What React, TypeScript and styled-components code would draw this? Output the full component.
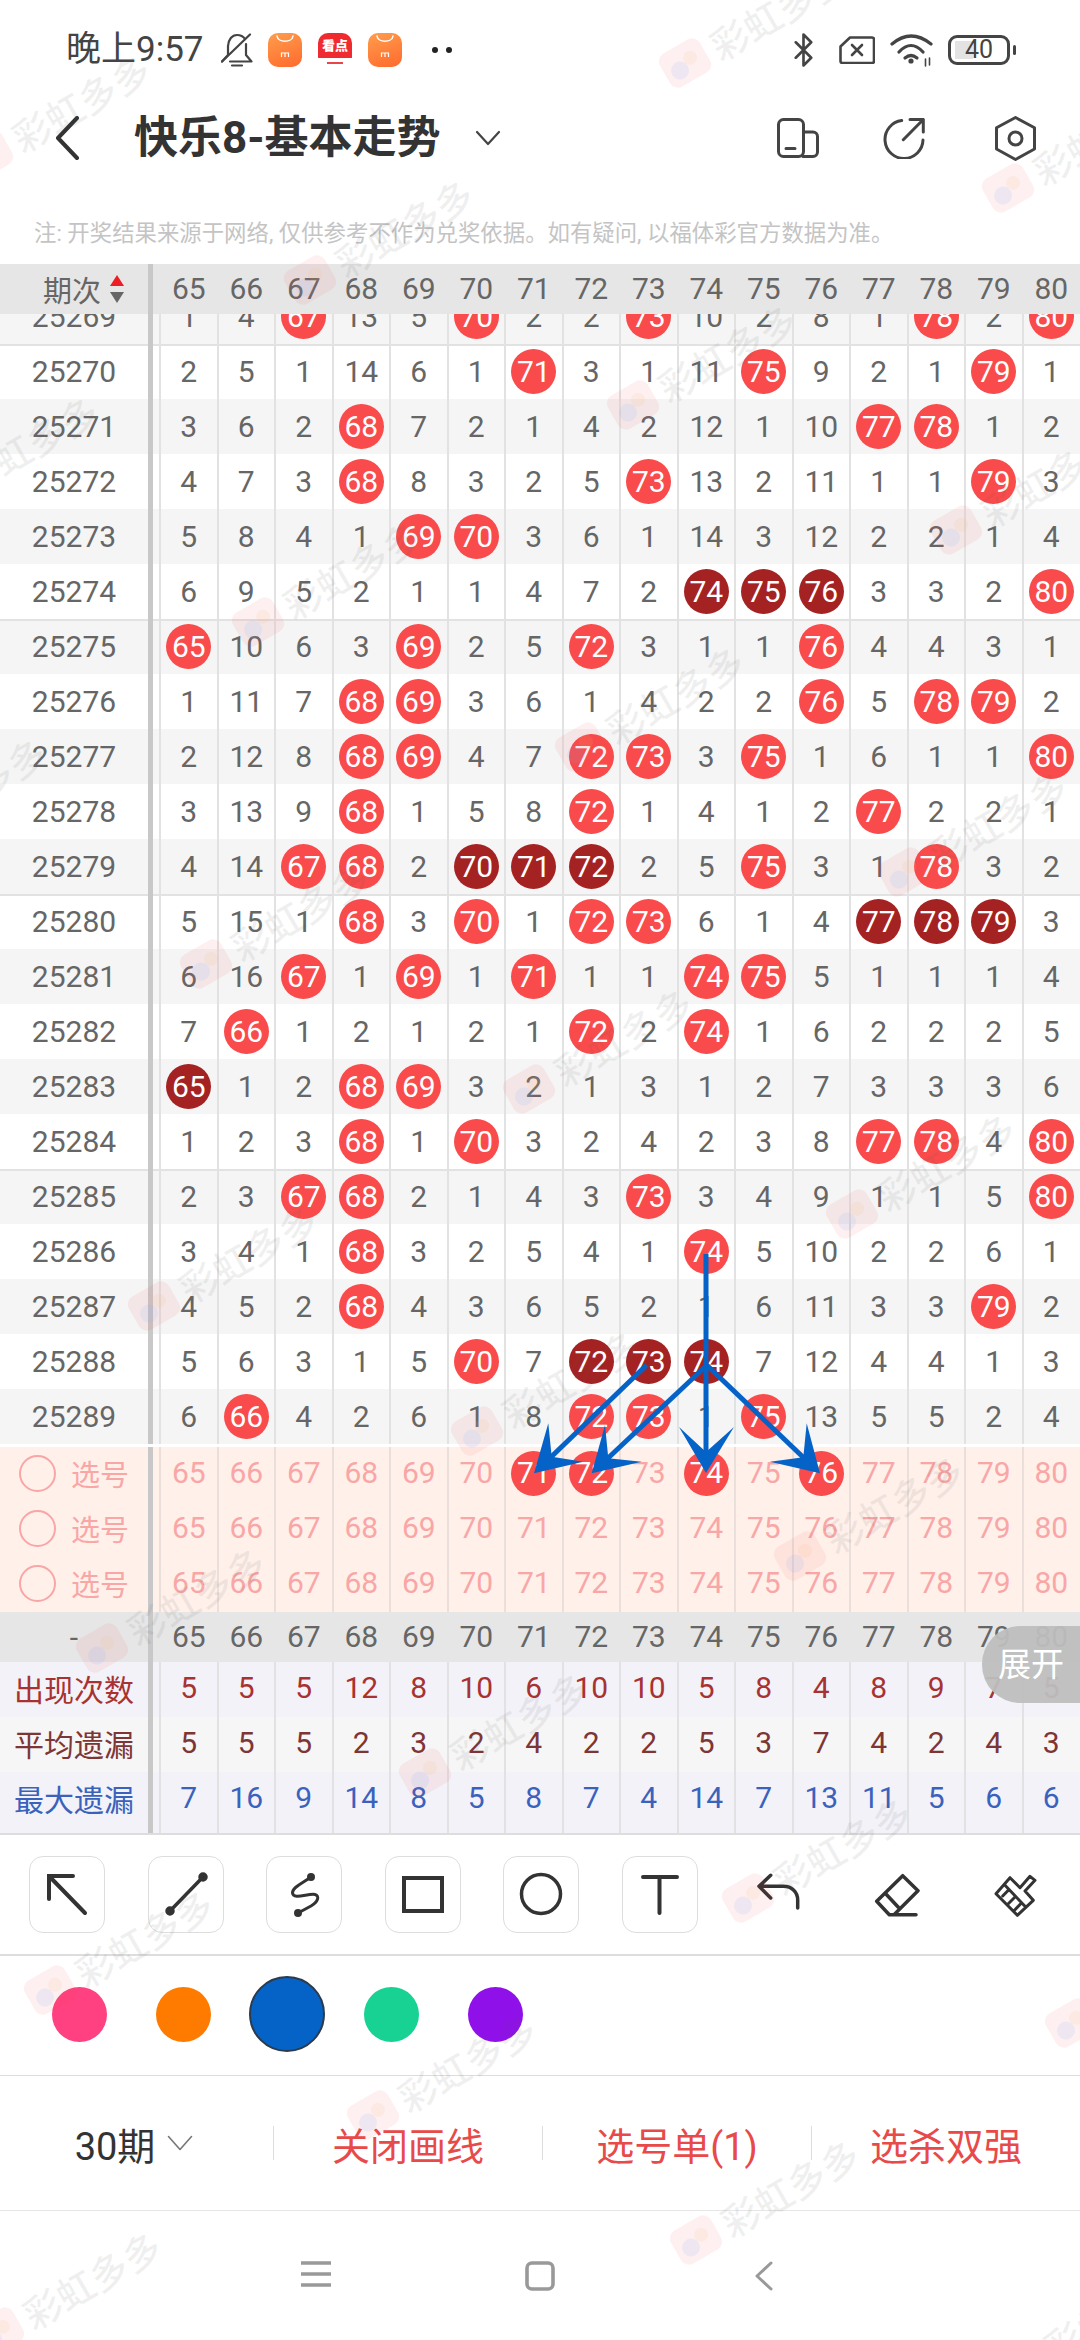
import React from 'react';
import styled, { createGlobalStyle } from 'styled-components';

const Global = createGlobalStyle`
  html, body { margin: 0; padding: 0; background: #fff; }
  * { box-sizing: border-box; }
  body { font-family: Roboto, "Noto Sans CJK SC", sans-serif; }
`;

const Page = styled.div`
  position: relative; width: 1080px; height: 2340px; overflow: hidden; background: #fff;
  display: flex; flex-direction: column;
`;

/* status bar */
const StatusBar = styled.div`
  height: 100px; flex: none; display: flex; align-items: center; padding: 0 64px 0 66px; color: #444;
`;
const Time = styled.div`
  width: 155px; font-size: 35px; line-height: 40px; color: #444; white-space: nowrap;
`;
const Bell = styled.svg`
  width: 32px; height: 34px; margin-right: 15px; flex: none;
`;
const AppIcons = styled.div`
  display: flex; gap: 16px;
`;
const ShopIcon = styled.svg`
  width: 34px; height: 34px; border-radius: 10px; background: linear-gradient(160deg, #ff9d4d, #ff6a2c); flex: none;
`;
const NewsIcon = styled.div`
  width: 34px; height: 34px; border-radius: 10px; overflow: hidden; display: flex; flex-direction: column; align-items: center; flex: none;
  background: linear-gradient(#ef2b2f 0 73%, #fff 73%);
`;
const NewsText = styled.span`
  font-size: 13px; line-height: 26px; font-weight: 900; color: #fff; white-space: nowrap;
`;
const NewsLine = styled.span`
  width: 16px; height: 2px; margin-top: 3px; background: #e8474a;
`;
const Dots = styled.div`
  display: flex; gap: 8px; margin-left: 30px;
`;
const Dot = styled.span`
  width: 6px; height: 6px; border-radius: 50%; background: #222;
`;
const StatusRight = styled.div`
  margin-left: auto; display: flex; align-items: center;
`;
const StatusGlyph = styled.svg<{ $after: number }>`
  flex: none; margin-right: ${p => p.$after}px;
`;
const Battery = styled.div`
  width: 62px; height: 30px; border: 3px solid #444; border-radius: 9px; display: flex; align-items: center; justify-content: center;
  font-size: 25px; line-height: 24px; color: #444;
  background: linear-gradient(#e3e3e3, #e3e3e3) 4px 3px / 18px 18px no-repeat;
`;
const BatteryCap = styled.span`
  width: 3px; height: 10px; margin-left: 3px; border-radius: 2px; background: #444;
`;

/* nav */
const NavBar = styled.div`
  height: 76px; flex: none; display: flex; align-items: center; padding: 0 44px 0 55px;
`;
const BackGlyph = styled.svg`
  width: 25px; height: 44px; margin-right: 54px; flex: none;
`;
const Title = styled.div`
  font-size: 44px; font-weight: 700; color: #333; white-space: nowrap; line-height: 60px;
`;
const TitleChevron = styled.svg`
  width: 26px; height: 16px; margin-left: 34px; flex: none;
`;
const NavActions = styled.div`
  margin-left: auto; display: flex; align-items: center;
`;
const NavGlyph = styled.svg<{ $after?: number }>`
  flex: none; margin-right: ${p => p.$after ?? 0}px;
`;
const Notice = styled.div`
  height: 88px; flex: none; padding: 42px 0 0 34px; font-size: 22.4px; line-height: 30px; color: #c4c4c4; white-space: nowrap;
`;

/* table */
const Row = styled.div<{ $h?: number; $bg?: string; $line?: boolean; $first?: number }>`
  display: flex; flex: none; height: ${p => p.$h ?? 55}px; background: ${p => p.$bg ?? '#fff'};
  margin-top: ${p => p.$first ?? 0}px;
  box-shadow: ${p => (p.$line ? 'inset 0 2px 0 #e2e2e2' : 'none')};
`;
const Label = styled.div<{ $color?: string; $size?: number; $pb?: number; $pl?: number }>`
  width: 153px; flex: none; border-right: 5px solid #c8c8c8; display: flex; align-items: center; justify-content: center; gap: 3px;
  font-size: ${p => p.$size ?? 30}px; color: ${p => p.$color ?? '#666'}; white-space: nowrap;
  padding-bottom: ${p => p.$pb ?? 0}px; padding-left: ${p => p.$pl ?? 0}px;
`;
const Cells = styled.div`
  margin-left: 6px; display: grid; grid-template-columns: repeat(16, 57.5px); flex: none;
`;
const Cell = styled.div<{ $color?: string; $rule?: string; $pb?: number }>`
  display: flex; align-items: center; justify-content: center; font-size: 30px; line-height: 36px;
  color: ${p => p.$color ?? '#666'};
  border-left: 2px solid ${p => p.$rule ?? 'transparent'};
  padding-bottom: ${p => p.$pb ?? 0}px;
`;
const Ball = styled.span<{ $dark?: boolean }>`
  width: 45px; height: 45px; border-radius: 50%; flex: none; display: flex; align-items: center; justify-content: center;
  background: ${p => (p.$dark ? '#a52222' : '#f94b4b')}; color: #fff; font-size: 30px;
`;
const SortMarks = styled.svg`
  width: 16px; height: 30px; flex: none; margin-left: 5px;
`;
const Scroller = styled.div`
  height: 1133px; overflow: hidden; flex: none;
`;
const Ring = styled.span`
  width: 37px; height: 37px; border-radius: 50%; border: 2.5px solid #f9a6a6; margin-right: 12px; flex: none;
`;
const TableEnd = styled.div`
  height: 2px; flex: none; background: #ddd;
`;

/* tools */
const Toolbar = styled.div`
  height: 121px; flex: none; padding: 21px 0 0 8px; display: grid; grid-template-columns: repeat(9, 118.5px); align-items: start; justify-items: center;
  border-bottom: 2px solid #ddd;
`;
const ToolButton = styled.div`
  width: 76px; height: 77px; border: 1px solid #ddd; border-radius: 14px; display: flex;
`;
const ToolGlyph = styled.svg`
  width: 74px; height: 75px; color: #333;
`;
const PlainGlyph = styled.svg`
  margin-top: 17px; color: #333;
`;
const Swatches = styled.div`
  height: 120px; flex: none; display: flex; align-items: center; padding: 0 0 3px 27px; border-bottom: 1px solid #ddd;
`;
const SwatchSlot = styled.div`
  width: 104.2px; display: flex; justify-content: center; flex: none;
`;
const Swatch = styled.span<{ $color: string; $active?: boolean }>`
  width: ${p => (p.$active ? 76 : 55)}px; height: ${p => (p.$active ? 76 : 55)}px; border-radius: 50%; background: ${p => p.$color};
  border: ${p => (p.$active ? '2px solid #2b3a4c' : 'none')};
`;
const Actions = styled.div`
  height: 135px; flex: none; display: flex; align-items: center; border-bottom: 1px solid #e6e6e6;
`;
const Action = styled.div<{ $red?: boolean; $shift?: number }>`
  flex: 1; display: flex; align-items: center; justify-content: center; gap: 12px; font-size: 38px; white-space: nowrap;
  color: ${p => (p.$red ? '#e84a4a' : '#333')};
  padding-right: ${p => p.$shift ?? 0}px;
`;
const Separator = styled.span`
  width: 1px; height: 34px; background: #ddd; flex: none;
`;
const Chevron = styled.svg`
  width: 26px; height: 16px; flex: none;
`;
const SystemNav = styled.div`
  flex: 1; padding-top: 50px; display: grid; grid-template-columns: repeat(3, 224px); justify-content: center; justify-items: center; align-items: start;
`;

/* overlays */
const ExpandTab = styled.div`
  position: absolute; left: 982px; top: 1626px; width: 98px; height: 77px; border-radius: 38px 0 0 38px;
  background: rgba(190, 190, 190, 0.95); color: #fff; font-size: 33px; display: flex; align-items: center; padding: 0 0 5px 16px; white-space: nowrap;
`;
const DrawLayer = styled.svg`
  position: absolute; left: 0; top: 0; width: 1080px; height: 2340px; pointer-events: none;
`;
const MarkLayer = styled.div`
  position: absolute; inset: 0; overflow: hidden; pointer-events: none;
`;
const Mark = styled.div`
  position: absolute; width: 0; height: 0;
`;
const MarkLogo = styled.svg`
  position: absolute; left: -26px; top: -26px; width: 52px; height: 52px; transform: rotate(-30deg);
`;
const MarkText = styled.span`
  position: absolute; left: 95px; top: -50px; transform: translate(-50%, -50%) rotate(-30deg);
  font-size: 38px; font-weight: 500; line-height: 44px; color: rgba(90, 90, 90, 0.09); white-space: nowrap;
`;

const NUMS = Array.from({ length: 16 }, (_, i) => 65 + i);
const DATA: [number, number[]][] = [
  [25269, [1, 4, 67, 13, 5, 70, 2, 2, 73, 10, 2, 8, 1, 78, 2, 80]],
  [25270, [2, 5, 1, 14, 6, 1, 71, 3, 1, 11, 75, 9, 2, 1, 79, 1]],
  [25271, [3, 6, 2, 68, 7, 2, 1, 4, 2, 12, 1, 10, 77, 78, 1, 2]],
  [25272, [4, 7, 3, 68, 8, 3, 2, 5, 73, 13, 2, 11, 1, 1, 79, 3]],
  [25273, [5, 8, 4, 1, 69, 70, 3, 6, 1, 14, 3, 12, 2, 2, 1, 4]],
  [25274, [6, 9, 5, 2, 1, 1, 4, 7, 2, -74, -75, -76, 3, 3, 2, 80]],
  [25275, [65, 10, 6, 3, 69, 2, 5, 72, 3, 1, 1, 76, 4, 4, 3, 1]],
  [25276, [1, 11, 7, 68, 69, 3, 6, 1, 4, 2, 2, 76, 5, 78, 79, 2]],
  [25277, [2, 12, 8, 68, 69, 4, 7, 72, 73, 3, 75, 1, 6, 1, 1, 80]],
  [25278, [3, 13, 9, 68, 1, 5, 8, 72, 1, 4, 1, 2, 77, 2, 2, 1]],
  [25279, [4, 14, 67, 68, 2, -70, -71, -72, 2, 5, 75, 3, 1, 78, 3, 2]],
  [25280, [5, 15, 1, 68, 3, 70, 1, 72, 73, 6, 1, 4, -77, -78, -79, 3]],
  [25281, [6, 16, 67, 1, 69, 1, 71, 1, 1, 74, 75, 5, 1, 1, 1, 4]],
  [25282, [7, 66, 1, 2, 1, 2, 1, 72, 2, 74, 1, 6, 2, 2, 2, 5]],
  [25283, [-65, 1, 2, 68, 69, 3, 2, 1, 3, 1, 2, 7, 3, 3, 3, 6]],
  [25284, [1, 2, 3, 68, 1, 70, 3, 2, 4, 2, 3, 8, 77, 78, 4, 80]],
  [25285, [2, 3, 67, 68, 2, 1, 4, 3, 73, 3, 4, 9, 1, 1, 5, 80]],
  [25286, [3, 4, 1, 68, 3, 2, 5, 4, 1, 74, 5, 10, 2, 2, 6, 1]],
  [25287, [4, 5, 2, 68, 4, 3, 6, 5, 2, 1, 6, 11, 3, 3, 79, 2]],
  [25288, [5, 6, 3, 1, 5, 70, 7, -72, -73, -74, 7, 12, 4, 4, 1, 3]],
  [25289, [6, 66, 4, 2, 6, 1, 8, 72, 73, 1, 75, 13, 5, 5, 2, 4]],
];
const PICKED = [71, 72, 74, 76];
const STATS: { label: string; color: string; bg: string; values: number[]; h: number; pb: number }[] = [
  { label: '出现次数', color: '#a83232', bg: '#f2f2f8', values: [5, 5, 5, 12, 8, 10, 6, 10, 10, 5, 8, 4, 8, 9, 7, 5], h: 55, pb: 3 },
  { label: '平均遗漏', color: '#7d3535', bg: '#f6f6f6', values: [5, 5, 5, 2, 3, 2, 4, 2, 2, 5, 3, 7, 4, 2, 4, 3], h: 55, pb: 3 },
  { label: '最大遗漏', color: '#3a62bd', bg: '#f2f2f8', values: [7, 16, 9, 14, 8, 5, 8, 7, 4, 14, 7, 13, 11, 5, 6, 6], h: 61, pb: 9 },
];
const SWATCHES = ['#ff4081', '#ff7b00', '#0563c8', '#18d293', '#9010ea'];

const MARKS: { x: number; y: number }[] = [];
for (let i = -4; i <= 4; i++) {
  for (let j = -2; j <= 8; j++) {
    const x = 373 + i * 323 + j * 52;
    const y = 2115 + i * 125 - j * 342;
    if (x > -200 && x < 1180 && y > -120 && y < 2460) MARKS.push({ x, y });
  }
}

const RULE = '#e2e2e2';
const PINK_RULE = '#eadfdb';

function Shop() {
  return (
    <ShopIcon viewBox="0 0 34 34">
      <path d="M9 3c1 7 15 7 16 0" fill="none" stroke="#fff" strokeWidth="1.6" strokeLinecap="round" />
      <path d="M13.5 24v-4h7v4M17 20v4" fill="none" stroke="#fff" strokeWidth="1.2" />
    </ShopIcon>
  );
}

function BallRow({ num, values, bg, line, first }: { num: number; values: number[]; bg: string; line: boolean; first?: number }) {
  return (
    <Row $bg={bg} $line={line} $first={first}>
      <Label>{num}</Label>
      <Cells>
        {values.map((v, i) => (
          <Cell key={i} $rule={RULE}>
            {Math.abs(v) >= 65 ? <Ball $dark={v < 0}>{Math.abs(v)}</Ball> : v}
          </Cell>
        ))}
      </Cells>
    </Row>
  );
}

const Arrow = ({ from, to, head }: { from: [number, number]; to: [number, number]; head: string }) => (
  <>
    <line x1={from[0]} y1={from[1]} x2={to[0]} y2={to[1]} stroke="#0563c8" strokeWidth="5" />
    <polygon points={head} fill="#0563c8" />
  </>
);

export default function App() {
  return (
    <Page>
      <Global />
      <StatusBar>
        <Time>晚上9:57</Time>
        <Bell viewBox="0 0 32 34" fill="none" stroke="#444" strokeWidth="2.2" strokeLinecap="round" strokeLinejoin="round">
          <path d="M1 28.5 7 22V13C7.5 6.5 11 2 16 2c3 0 6 1 8 4M25 11v11l5.5 6.5H9" />
          <path d="M29 1.5 1 28.5M11 32.5h10" />
        </Bell>
        <AppIcons>
          <Shop />
          <NewsIcon>
            <NewsText>看点</NewsText>
            <NewsLine />
          </NewsIcon>
          <Shop />
        </AppIcons>
        <Dots>
          <Dot />
          <Dot />
        </Dots>
        <StatusRight>
          <StatusGlyph $after={25} width="21" height="34" viewBox="5.5 1 13 22" fill="none" stroke="#444" strokeWidth="1.7" strokeLinecap="round" strokeLinejoin="round">
            <path d="m7 7 10 10-5 5V2l5 5L7 17" />
          </StatusGlyph>
          <StatusGlyph $after={15} width="36" height="28" viewBox="0 0 36 28" fill="none" stroke="#444" strokeWidth="2.6" strokeLinejoin="round">
            <path d="M11 1.5h22a2 2 0 0 1 2 2V25a2 2 0 0 1-2 2H3.5a2 2 0 0 1-2-2V10.5Z" />
            <path d="m13 9 10 10M23 9 13 19" strokeLinecap="round" />
          </StatusGlyph>
          <StatusGlyph $after={15} width="43" height="33" viewBox="0 0 43 33" fill="none" stroke="#444" strokeWidth="3.2" strokeLinecap="round">
            <path d="M2 10Q21-6 41 10M9 18Q21 5 33 18" />
            <path d="M15 24Q21 19 27 24" />
            <circle cx="21" cy="27" r="2.6" fill="#444" stroke="none" />
            <path d="M35.5 25v7M39.5 24v7" strokeWidth="1.6" />
          </StatusGlyph>
          <Battery>40</Battery>
          <BatteryCap />
        </StatusRight>
      </StatusBar>

      <NavBar>
        <BackGlyph viewBox="0 0 25 44" fill="none" stroke="#333" strokeWidth="4" strokeLinecap="round" strokeLinejoin="round">
          <path d="M22 2 3 22l19 20" />
        </BackGlyph>
        <Title>快乐8-基本走势</Title>
        <TitleChevron viewBox="0 0 26 16" fill="none" stroke="#444" strokeWidth="2.2" strokeLinecap="round" strokeLinejoin="round">
          <path d="m2 2 11 12L24 2" />
        </TitleChevron>
        <NavActions>
          <NavGlyph $after={64} width="42" height="40" viewBox="0 0 42 40" fill="none" stroke="#444" strokeWidth="3" strokeLinecap="round" strokeLinejoin="round">
            <rect x="1.5" y="1.5" width="25" height="37" rx="5" />
            <path d="M26.5 14H36a4.5 4.5 0 0 1 4.5 4.5V34a4.5 4.5 0 0 1-4.5 4.5H26M9 30.5h9" />
          </NavGlyph>
          <NavGlyph $after={70} width="42" height="41" viewBox="0 0 42 41" fill="none" stroke="#444" strokeWidth="3" strokeLinecap="round" strokeLinejoin="round">
            <path d="M18.7 2.6A19 19 0 1 0 40 22" />
            <path d="M20.3 21.7 40.3 1.5M27 1.5h13.3V14" />
          </NavGlyph>
          <NavGlyph width="41" height="45" viewBox="0 0 41 45" fill="none" stroke="#444" strokeWidth="3" strokeLinejoin="round">
            <path d="M20.5 1.5 39.5 11.8V33L20.5 43.5 1.5 33V11.8Z" />
            <circle cx="20.5" cy="22.5" r="6.5" />
          </NavGlyph>
        </NavActions>
      </NavBar>

      <Notice>注: 开奖结果来源于网络, 仅供参考不作为兑奖依据。如有疑问, 以福体彩官方数据为准。</Notice>

      <Row $h={50} $bg="#e6e6e6">
        <Label $size={29} $pl={20}>
          期次
          <SortMarks viewBox="0 0 16 30">
            <path d="M8 1 15 12H1Z" fill="#ee1c25" />
            <path d="M1 18h14L8 29Z" fill="#666" />
          </SortMarks>
        </Label>
        <Cells>
          {NUMS.map(n => (
            <Cell key={n}>{n}</Cell>
          ))}
        </Cells>
      </Row>

      <Scroller>
        {DATA.map(([num, values], i) => (
          <BallRow
            key={num}
            num={num}
            values={values}
            bg={i % 2 === 0 ? '#f5f5f5' : '#fff'}
            line={(i - 1) % 5 === 0}
            first={i === 0 ? -25 : 0}
          />
        ))}
      </Scroller>

      {[0, 1, 2].map(r => (
        <Row key={r} $bg="#fff0ea">
          <Label $size={29} $color="#f9a6a6" $pb={3}>
            <Ring />
            选号
          </Label>
          <Cells>
            {NUMS.map(n => (
              <Cell key={n} $color="#f9a6a6" $rule={PINK_RULE} $pb={3}>
                {r === 0 && PICKED.includes(n) ? <Ball>{n}</Ball> : n}
              </Cell>
            ))}
          </Cells>
        </Row>
      ))}

      <Row $h={50} $bg="#e6e6e6">
        <Label>-</Label>
        <Cells>
          {NUMS.map(n => (
            <Cell key={n}>{n}</Cell>
          ))}
        </Cells>
      </Row>

      {STATS.map(s => (
        <Row key={s.label} $h={s.h} $bg={s.bg}>
          <Label $color={s.color} $pb={s.pb}>
            {s.label}
          </Label>
          <Cells>
            {s.values.map((v, i) => (
              <Cell key={i} $color={s.color} $rule={RULE} $pb={s.pb}>
                {v}
              </Cell>
            ))}
          </Cells>
        </Row>
      ))}
      <TableEnd />

      <Toolbar>
        <ToolButton>
          <ToolGlyph viewBox="0 0 74 75" fill="none" stroke="currentColor" strokeWidth="4" strokeLinecap="round">
            <path d="M43 19H19V42M19 19l36 37" />
          </ToolGlyph>
        </ToolButton>
        <ToolButton>
          <ToolGlyph viewBox="0 0 74 75" fill="none" stroke="currentColor" strokeWidth="3.5" strokeLinecap="round">
            <path d="M54 20 21 54" />
            <circle cx="54" cy="20" r="3" fill="currentColor" />
            <circle cx="21" cy="54" r="3" fill="currentColor" />
          </ToolGlyph>
        </ToolButton>
        <ToolButton>
          <ToolGlyph viewBox="0 0 74 75" fill="none" stroke="currentColor" strokeWidth="3" strokeLinecap="round">
            <path d="M44 20C36 26 25 30 25.5 36 26 43 42 36 48 37.5 53 39 51 45 44 49L31 56" />
            <circle cx="44" cy="20" r="2.5" fill="currentColor" />
            <circle cx="31" cy="56" r="2.5" fill="currentColor" />
          </ToolGlyph>
        </ToolButton>
        <ToolButton>
          <ToolGlyph viewBox="0 0 74 75" fill="none" stroke="currentColor" strokeWidth="4">
            <rect x="18" y="21" width="38" height="33" />
          </ToolGlyph>
        </ToolButton>
        <ToolButton>
          <ToolGlyph viewBox="0 0 74 75" fill="none" stroke="currentColor" strokeWidth="3.5">
            <circle cx="37" cy="37" r="19.5" />
          </ToolGlyph>
        </ToolButton>
        <ToolButton>
          <ToolGlyph viewBox="0 0 74 75" fill="none" stroke="currentColor" strokeWidth="4" strokeLinecap="round">
            <path d="M20 20H54M36.5 20V56" />
          </ToolGlyph>
        </ToolButton>
        <PlainGlyph width="44" height="38" viewBox="0 0 44 38" fill="none" stroke="currentColor" strokeWidth="3.5" strokeLinecap="round" strokeLinejoin="round">
          <path d="M14.7 2.3 3 13.3 14.7 25M3 13.3H27.3C36 13.3 41.7 19 41.7 27V35" />
        </PlainGlyph>
        <PlainGlyph width="46" height="44" viewBox="0 0 46 44" fill="none" stroke="currentColor" strokeWidth="3.5" strokeLinecap="round" strokeLinejoin="round">
          <path d="M28.7 2.7 44 17.7 20 41.7H15.3L2.7 28.3ZM11 20 24.3 34.3M15.3 41.7H42" />
        </PlainGlyph>
        <PlainGlyph width="45" height="45" viewBox="0 0 45 45" fill="none" stroke="currentColor" strokeWidth="3" strokeLinecap="round" strokeLinejoin="round">
          <path d="M3 20.7 17 4.7 27 14.7 37 3.3 42 7.3 32 18 40.3 27.3 24.3 42.3ZM12 12.3 32.7 34M15.3 17.3 9.7 23M22 24 15.3 30.7M27.7 30.7 22 36.7" />
        </PlainGlyph>
      </Toolbar>

      <Swatches>
        {SWATCHES.map((c, i) => (
          <SwatchSlot key={c}>
            <Swatch $color={c} $active={i === 2} />
          </SwatchSlot>
        ))}
      </Swatches>

      <Actions>
        <Action $shift={5}>
          30期
          <Chevron viewBox="0 0 26 16" fill="none" stroke="#777" strokeWidth="1.6" strokeLinecap="round" strokeLinejoin="round">
            <path d="m1.5 1.5 11.5 13 11.5-13" />
          </Chevron>
        </Action>
        <Separator />
        <Action $red>关闭画线</Action>
        <Separator />
        <Action $red>选号单(1)</Action>
        <Separator />
        <Action $red>选杀双强</Action>
      </Actions>

      <SystemNav>
        <svg width="30" height="26" viewBox="0 0 30 26" fill="none" stroke="#999" strokeWidth="3.6">
          <path d="M0 2h30M0 13h30M0 24h30" />
        </svg>
        <svg width="30" height="30" viewBox="0 0 30 30" fill="none" stroke="#999" strokeWidth="3.6">
          <rect x="2" y="2" width="26" height="26" rx="5" />
        </svg>
        <svg width="20" height="30" viewBox="0 0 20 30" fill="none" stroke="#999" strokeWidth="3" strokeLinecap="round" strokeLinejoin="round">
          <path d="M17 2 3 15l14 13" />
        </svg>
      </SystemNav>

      <ExpandTab>展开</ExpandTab>

      <DrawLayer viewBox="0 0 1080 2340">
        <Arrow from={[706, 1254]} to={[706, 1456]} head="706,1473 679,1427 706,1452 734,1427" />
        <Arrow from={[707, 1365]} to={[606, 1460]} head="591.7,1473.3 605,1425 608.3,1458.3 641.7,1461.7" />
        <Arrow from={[646.7, 1365]} to={[550, 1458]} head="534,1473.3 548.3,1423.3 551.7,1456.7 583.3,1461.7" />
        <Arrow from={[706.7, 1365]} to={[805, 1459]} head="820,1473.3 806.7,1423.3 803.3,1457.3 770,1461.7" />
      </DrawLayer>

      <MarkLayer>
        {MARKS.map(m => (
          <Mark key={`${m.x}-${m.y}`} style={{ left: m.x, top: m.y }}>
            <MarkLogo viewBox="0 0 52 52">
              <rect x="3" y="7" width="46" height="38" rx="9" fill="rgba(240,70,70,0.08)" />
              <circle cx="18" cy="30" r="9" fill="rgba(120,170,255,0.12)" />
              <circle cx="33" cy="24" r="7" fill="rgba(240,190,120,0.12)" />
            </MarkLogo>
            <MarkText>彩虹多多</MarkText>
          </Mark>
        ))}
      </MarkLayer>
    </Page>
  );
}
